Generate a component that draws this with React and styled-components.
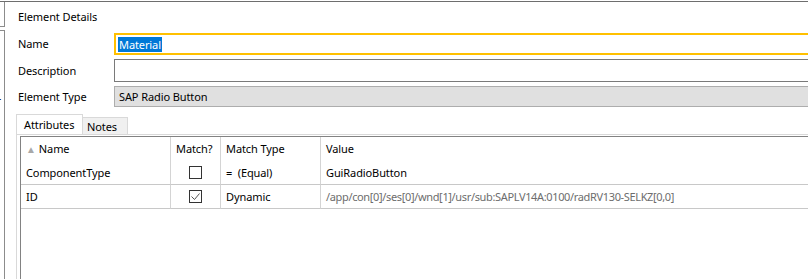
import React from 'react';
import styled, { createGlobalStyle } from 'styled-components';

const Global = createGlobalStyle`
    html, body {
        margin: 0;
        padding: 0;
        background: #ffffff;
    }
    body {
        font-family: "Noto Sans", "Open Sans", sans-serif;
        font-size: 11px;
        letter-spacing: -0.1px;
        color: #000000;
    }
`;

const Page = styled.div`
    width: 808px;
    height: 279px;
    overflow: hidden;
    padding-top: 1px;
    box-sizing: border-box;
`;

const Frame = styled.div`
    display: flex;
    height: 100%;
    border-top: 1px solid #6e6e6e;
`;

const LeftRail = styled.div`
    width: 5px;
    display: flex;
    flex-direction: column;
    gap: 3px;
`;

const RailBox = styled.div`
    height: ${props => props.height || 'auto'};
    flex: ${props => props.grow ? 1 : 'none'};
    border-right: 1px solid #8c8c8c;
    border-bottom: ${props => props.grow ? 'none' : '1px solid #8c8c8c'};
    border-top: ${props => props.grow ? '1px solid #8c8c8c' : 'none'};
    overflow: hidden;
    font-size: 12px;
    line-height: 16px;

    span {
        display: block;
        margin-top: 63px;
        margin-left: -4px;
    }
`;

const Main = styled.div`
    flex: 1;
    margin-right: -20px;
    padding: 7px 0 0 13px;
    display: flex;
    flex-direction: column;
`;

const Title = styled.div`
    line-height: 16px;
    height: 16px;
`;

const Form = styled.div`
    display: grid;
    grid-template-columns: 96px 1fr;
    grid-template-rows: 22px 23px 21px;
    row-gap: 4px;
    margin-top: 8px;
    align-items: center;
`;

const Label = styled.div`
    line-height: 16px;
`;

const Field = styled.div`
    height: 100%;
    box-sizing: border-box;
    border: ${props => props.focus ? '2px solid #ffc000' : props.disabled ? '1px solid #adadad' : '1px solid #7a7a7a'};
    background: ${props => props.disabled ? '#e0e0e0' : '#ffffff'};
    display: flex;
    align-items: center;
    padding-left: ${props => props.focus ? '2px' : '4px'};
`;

const Selection = styled.span`
    background: #0078d7;
    color: #ffffff;
    line-height: 15px;
    padding: 0 1px;
`;

const Tabs = styled.div`
    display: flex;
    align-items: flex-end;
    margin: 7px 0 0 -2px;
    height: 20px;
`;

const Tab = styled.div`
    box-sizing: border-box;
    height: ${props => props.active ? '20px' : '17px'};
    width: ${props => props.width};
    border: 1px solid #d9d9d9;
    border-bottom: none;
    border-left: ${props => props.active ? '1px solid #d9d9d9' : 'none'};
    background: ${props => props.active ? '#ffffff' : '#f0f0f0'};
    padding: ${props => props.active ? '2px 0 0 7px' : '1px 0 0 4px'};
    line-height: 15px;
`;

const TabPanel = styled.div`
    flex: 1;
    margin-left: -2px;
    border-left: 1px solid #d9d9d9;
    border-top: 1px solid #d9d9d9;
    padding: 1px 0 0 3px;
    display: flex;
`;

const Table = styled.div`
    flex: 1;
    border-left: 1px solid #828282;
    border-top: 1px solid #828282;
    display: grid;
    grid-template-columns: 150px 50px 100px 1fr;
    grid-auto-rows: 24px;
    align-content: start;
`;

const Cell = styled.div`
    box-sizing: border-box;
    display: flex;
    align-items: center;
    justify-content: ${props => props.center ? 'center' : 'flex-start'};
    padding-left: ${props => props.center ? '0' : '5px'};
    border-right: ${props => props.last ? 'none' : '1px solid #d4d4d4'};
    border-bottom: ${props => props.header ? 'none' : '1px solid #c8c8c8'};
    color: ${props => props.muted ? '#6d6d6d' : '#000000'};
    letter-spacing: ${props => props.muted ? '-0.35px' : 'inherit'};
    white-space: pre;
    line-height: 16px;
`;

const SortArrow = styled.span`
    color: #a8a8a8;
    font-size: 10px;
    margin-right: 3px;
`;

const Check = styled.div`
    width: 13px;
    height: 13px;
    box-sizing: border-box;
    border: 1px solid #333333;
    background: #ffffff;
    display: flex;
    align-items: center;
    justify-content: center;
`;

const rows = [
    { name: 'ComponentType', match: false, type: '=  (Equal)', value: 'GuiRadioButton', muted: false },
    { name: 'ID', match: true, type: 'Dynamic', value: '/app/con[0]/ses[0]/wnd[1]/usr/sub:SAPLV14A:0100/radRV130-SELKZ[0,0]', muted: true },
];

const App = () => (
    <>
        <Global />
        <Page>
            <Frame>
                <LeftRail>
                    <RailBox height="24px" />
                    <RailBox grow><span>r</span></RailBox>
                </LeftRail>
                <Main>
                    <Title>Element Details</Title>
                    <Form>
                        <Label>Name</Label>
                        <Field focus><Selection>Material</Selection></Field>
                        <Label>Description</Label>
                        <Field />
                        <Label>Element Type</Label>
                        <Field disabled>SAP Radio Button</Field>
                    </Form>
                    <Tabs>
                        <Tab active width="67px">Attributes</Tab>
                        <Tab width="45px">Notes</Tab>
                    </Tabs>
                    <TabPanel>
                        <Table>
                            <Cell header><SortArrow>▲</SortArrow>Name</Cell>
                            <Cell header>Match?</Cell>
                            <Cell header>Match Type</Cell>
                            <Cell header last>Value</Cell>
                            {rows.map((row, i) => (
                                <React.Fragment key={i}>
                                    <Cell>{row.name}</Cell>
                                    <Cell center>
                                        <Check>
                                            {row.match && (
                                                <svg width="11" height="11" viewBox="0 0 11 11">
                                                    <polyline points="1.5,5.5 4.5,8.5 9.5,2.5" fill="none" stroke="#555" strokeWidth="1" />
                                                </svg>
                                            )}
                                        </Check>
                                    </Cell>
                                    <Cell>{row.type}</Cell>
                                    <Cell last muted={row.muted}>{row.value}</Cell>
                                </React.Fragment>
                            ))}
                        </Table>
                    </TabPanel>
                </Main>
            </Frame>
        </Page>
    </>
);

export default App;
